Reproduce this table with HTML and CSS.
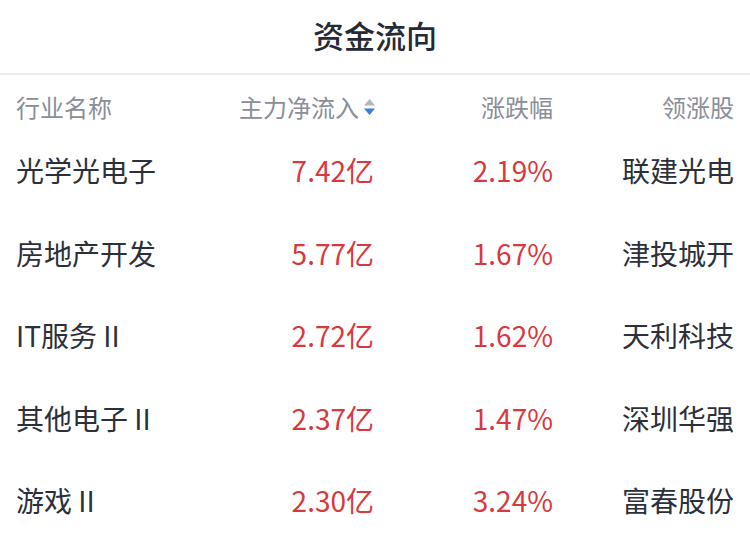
FILE: index.html
```html
<!DOCTYPE html>
<html lang="zh-CN">
<head>
<meta charset="utf-8">
<title>资金流向</title>
<link rel="stylesheet" href="styles.css">
</head>
<body>
<div class="panel">
  <div class="title">资金流向</div>
  <div class="table">
    <div class="row head">
      <div class="c1">行业名称</div>
      <div class="c2">主力净流入<svg class="sort" width="13" height="18" viewBox="0 0 13 18"><path d="M6.5 1 L12 7.5 L1 7.5 Z" fill="#b3b7c0"/><path d="M6.5 17 L12 10.5 L1 10.5 Z" fill="#3b7de2"/></svg></div>
      <div class="c3">涨跌幅</div>
      <div class="c4">领涨股</div>
    </div>
    <div class="row">
      <div class="c1">光学光电子</div>
      <div class="c2 up">7.42亿</div>
      <div class="c3 up">2.19%</div>
      <div class="c4">联建光电</div>
    </div>
    <div class="row">
      <div class="c1">房地产开发</div>
      <div class="c2 up">5.77亿</div>
      <div class="c3 up">1.67%</div>
      <div class="c4">津投城开</div>
    </div>
    <div class="row">
      <div class="c1">IT服务 II</div>
      <div class="c2 up">2.72亿</div>
      <div class="c3 up">1.62%</div>
      <div class="c4">天利科技</div>
    </div>
    <div class="row">
      <div class="c1">其他电子 II</div>
      <div class="c2 up">2.37亿</div>
      <div class="c3 up">1.47%</div>
      <div class="c4">深圳华强</div>
    </div>
    <div class="row">
      <div class="c1">游戏 II</div>
      <div class="c2 up">2.30亿</div>
      <div class="c3 up">3.24%</div>
      <div class="c4">富春股份</div>
    </div>
  </div>
</div>
</body>
</html>
```
FILE: styles.css
```css
html, body {
  margin: 0;
  padding: 0;
  background: #ffffff;
}
body {
  font-family: "Noto Sans CJK SC", "Noto Sans", sans-serif;
  color: #2c303b;
}
.panel {
  width: 750px;
}
.title {
  display: flex;
  align-items: center;
  justify-content: center;
  font-size: 31px;
  font-weight: 500;
  color: #262a35;
  border-bottom: 2px solid #ececec;
  box-sizing: border-box;
  height: 75px;
  padding-bottom: 4px;
}
.table {
  padding: 0 16px;
}
.row {
  display: grid;
  grid-template-columns: 180px 178px 179px 181px;
  align-items: center;
  height: 82.5px;
  padding-bottom: 6px;
  font-size: 28px;
  box-sizing: border-box;
}
.row.head {
  height: 57px;
  padding-top: 6px;
  padding-bottom: 0;
  font-size: 24px;
  color: #8a8e99;
}
.c1 { text-align: left; }
.c2, .c3, .c4 { text-align: right; }
.c2 {
  display: flex;
  align-items: center;
  justify-content: flex-end;
}
.head .c2 { margin-right: -2px; }
.sort {
  margin-left: 4px;
}
.up {
  color: #d9383c;
}
```
